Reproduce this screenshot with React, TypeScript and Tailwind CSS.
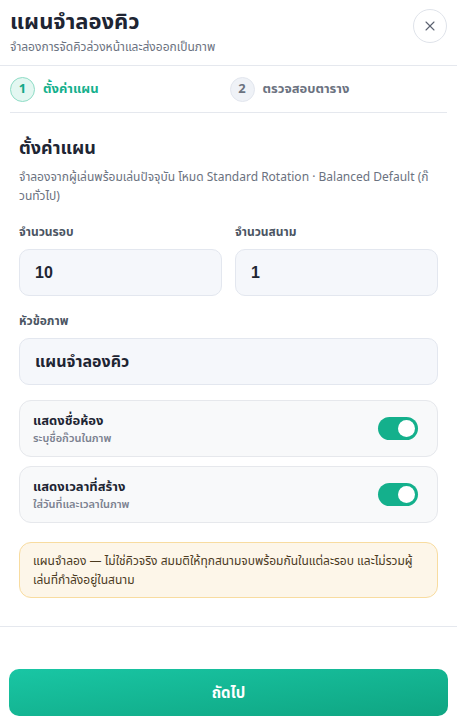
import React, { useState } from 'react';
import { X } from 'lucide-react';

const font = { fontFamily: '"Noto Sans", "Noto Sans Thai", "Noto Sans Thai UI", sans-serif' };

const Toggle: React.FC<{ on: boolean; onChange: () => void }> = ({ on, onChange }) => (
  <button
    onClick={onChange}
    className={`relative w-[40px] h-[23px] rounded-full transition-colors ${on ? 'bg-[#14b08c]' : 'bg-gray-300'}`}
  >
    <span
      className={`absolute top-[3px] w-[17px] h-[17px] rounded-full bg-white transition-all ${on ? 'left-[20px]' : 'left-[3px]'}`}
    />
  </button>
);

export default function App() {
  const [rounds, setRounds] = useState('10');
  const [courts, setCourts] = useState('1');
  const [title, setTitle] = useState('แผนจำลองคิว');
  const [showRoom, setShowRoom] = useState(true);
  const [showTime, setShowTime] = useState(true);

  return (
    <div style={font} className="w-[457px] h-[722px] bg-white flex flex-col overflow-hidden text-[#1f2937]">
      {/* Header */}
      <div className="flex items-start justify-between pl-[10px] pr-[10px] pt-[6px] pb-[9px]">
        <div>
          <h1 className="text-[22px] leading-[28px] font-bold text-[#1e2533]">แผนจำลองคิว</h1>
          <p className="mt-[4px] text-[12px] leading-[18px] text-[#6b7280]">จำลองการจัดคิวล่วงหน้าและส่งออกเป็นภาพ</p>
        </div>
        <button className="mt-[3px] w-[34px] h-[34px] rounded-full border border-[#dfe3ea] flex items-center justify-center text-[#5b6270]">
          <X className="w-[16px] h-[16px]" strokeWidth={1.6} />
        </button>
      </div>
      <div className="h-px bg-[#e5e8ee]" />

      {/* Steps */}
      <div className="px-[10px]">
        <div className="grid grid-cols-2 h-[47px] items-center border-b border-[#e5e8ee]">
          <div className="flex items-center gap-[8px]">
            <span className="w-[25px] h-[25px] rounded-full bg-[#e3f7f1] border border-[#8fdcc6] flex items-center justify-center text-[13px] font-bold text-[#14a886]">1</span>
            <span className="text-[13px] font-bold text-[#14b08c]">ตั้งค่าแผน</span>
          </div>
          <div className="flex items-center gap-[8px] pl-[1px]">
            <span className="w-[25px] h-[25px] rounded-full bg-[#eff2f7] border border-[#e2e6ee] flex items-center justify-center text-[13px] font-bold text-[#6b7280]">2</span>
            <span className="text-[13px] font-bold text-[#6b7280]">ตรวจสอบตาราง</span>
          </div>
        </div>
      </div>

      {/* Body */}
      <div className="flex-1 px-[19px] pt-[21px]">
        <h2 className="text-[18px] leading-[26px] font-bold text-[#1e2533]">ตั้งค่าแผน</h2>
        <p className="mt-[7px] pr-[6px] text-[12px] leading-[19px] text-[#6b7280] break-all">
          จำลองจากผู้เล่นพร้อมเล่นปัจจุบัน โหมด Standard Rotation · Balanced Default (ก๊วนทั่วไป)
        </p>

        <div className="mt-[18px] grid grid-cols-2 gap-[13px]">
          <label className="block">
            <span className="block text-[12px] leading-[18px] font-bold text-[#4b5563]">จำนวนรอบ</span>
            <input
              value={rounds}
              onChange={(e) => setRounds(e.target.value)}
              style={{ fontFamily: '"Liberation Sans", Arial, sans-serif' }}
              className="mt-[8px] w-full h-[47px] rounded-[10px] bg-[#f5f7fb] border border-[#e3e7ef] px-[15px] text-[16px] font-bold text-[#1e2533] outline-none"
            />
          </label>
          <label className="block">
            <span className="block text-[12px] leading-[18px] font-bold text-[#4b5563]">จำนวนสนาม</span>
            <input
              value={courts}
              onChange={(e) => setCourts(e.target.value)}
              style={{ fontFamily: '"Liberation Sans", Arial, sans-serif' }}
              className="mt-[8px] w-full h-[47px] rounded-[10px] bg-[#f5f7fb] border border-[#e3e7ef] px-[15px] text-[16px] font-bold text-[#1e2533] outline-none"
            />
          </label>
        </div>

        <label className="block mt-[16px]">
          <span className="block text-[12px] leading-[18px] font-bold text-[#4b5563]">หัวข้อภาพ</span>
          <input
            value={title}
            onChange={(e) => setTitle(e.target.value)}
            className="mt-[8px] w-full h-[47px] rounded-[10px] bg-[#f5f7fb] border border-[#e3e7ef] px-[15px] text-[16px] font-bold text-[#1e2533] outline-none"
          />
        </label>

        <div className="mt-[15px] flex flex-col gap-[9px]">
          <div className="h-[57px] rounded-[12px] bg-[#f8f9fa] border border-[#e6e8ec] flex items-center justify-between pl-[13px] pr-[19px]">
            <div>
              <div className="text-[13px] leading-[18px] font-bold text-[#1e2533]">แสดงชื่อห้อง</div>
              <div className="text-[11px] leading-[17px] font-semibold text-[#7b8190]">ระบุชื่อก๊วนในภาพ</div>
            </div>
            <Toggle on={showRoom} onChange={() => setShowRoom(!showRoom)} />
          </div>
          <div className="h-[57px] rounded-[12px] bg-[#f8f9fa] border border-[#e6e8ec] flex items-center justify-between pl-[13px] pr-[19px]">
            <div>
              <div className="text-[13px] leading-[18px] font-bold text-[#1e2533]">แสดงเวลาที่สร้าง</div>
              <div className="text-[11px] leading-[17px] font-semibold text-[#7b8190]">ใส่วันที่และเวลาในภาพ</div>
            </div>
            <Toggle on={showTime} onChange={() => setShowTime(!showTime)} />
          </div>
        </div>

        <div className="mt-[19px] rounded-[12px] bg-[#fdf6e9] border border-[#f8dca0] px-[13px] py-[8px] text-[12px] leading-[19px] text-[#4b3a1e]">
          แผนจำลอง — ไม่ใช่คิวจริง สมมติให้ทุกสนามจบพร้อมกันในแต่ละรอบ และไม่รวมผู้เล่นที่กำลังอยู่ในสนาม
        </div>
      </div>

      <div className="h-px bg-[#e5e8ee]" />
      <div className="h-[95px] px-[9px] pt-[42px]">
        <button className="w-full h-[47px] rounded-[10px] bg-gradient-to-br from-[#19c6a4] to-[#0fa582] text-white text-[15px] font-bold">
          ถัดไป
        </button>
      </div>
    </div>
  );
}
